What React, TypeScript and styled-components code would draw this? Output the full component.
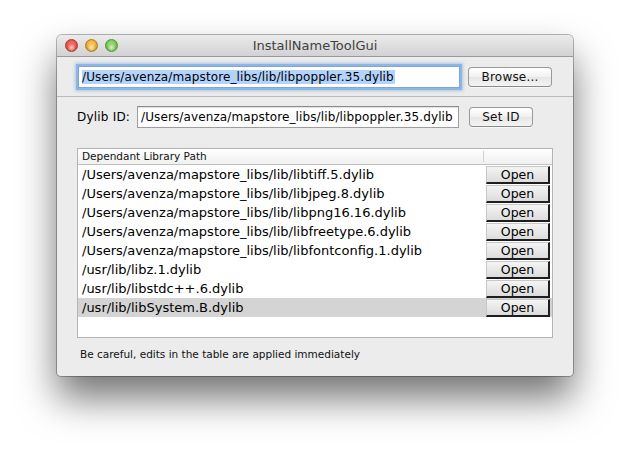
import React from "react";
import styled, { createGlobalStyle } from "styled-components";

const Global = createGlobalStyle`
  html, body { margin: 0; padding: 0; background: #ffffff; }
  body { font-family: "DejaVu Sans", "Liberation Sans", sans-serif; }
`;

const Page = styled.div`
  width: 630px;
  height: 455px;
  padding: 35px 0 0 57px;
  box-sizing: border-box;
`;

const Window = styled.div`
  width: 516px;
  height: 341px;
  background: #ececec;
  border-radius: 5px 5px 4px 4px;
  box-shadow: 0 0 0 1px rgba(0, 0, 0, 0.28), 0 22px 38px rgba(0, 0, 0, 0.55);
  display: flex;
  flex-direction: column;
  overflow: hidden;
`;

const TitleBar = styled.div`
  height: 22px;
  flex: none;
  background: linear-gradient(#ebebeb, #d2d2d2);
  border-bottom: 1px solid #9a9a9a;
  display: flex;
  align-items: center;
  position: relative;
  box-sizing: border-box;
`;

const Lights = styled.div`
  display: flex;
  gap: 7px;
  padding-left: 8px;
`;

const Light = styled.div<{ $c: string; $d: string }>`
  width: 13px;
  height: 13px;
  border-radius: 50%;
  box-sizing: border-box;
  border: 1px solid ${(p) => p.$d};
  background: radial-gradient(circle at 50% 72%, #ffffffaa 0, transparent 45%),
    radial-gradient(circle at 50% 40%, ${(p) => p.$c} 30%, ${(p) => p.$d} 100%);
`;

const Title = styled.div`
  position: absolute;
  left: 0;
  right: 0;
  text-align: center;
  font-size: 13px;
  color: #3f3f3f;
  pointer-events: none;
`;

const TopSection = styled.div`
  height: 40px;
  flex: none;
  display: flex;
  align-items: center;
  padding: 0 20px 0 21px;
  gap: 8px;
  box-sizing: border-box;
  border-bottom: 1px solid #bababa;
`;

const Field = styled.div<{ $focus?: boolean; $w: number }>`
  width: ${(p) => p.$w}px;
  height: 22px;
  flex: none;
  box-sizing: border-box;
  background: #fff;
  border: 1px solid ${(p) => (p.$focus ? "#7fa7d6" : "#9d9d9d")};
  border-top-color: ${(p) => (p.$focus ? "#7fa7d6" : "#8a8a8a")};
  box-shadow: ${(p) =>
    p.$focus
      ? "0 0 0 2px #8db6e6, 0 0 3px 3px rgba(90,150,220,0.45)"
      : "inset 0 1px 1px rgba(0,0,0,0.12)"};
  font-size: 12px;
  letter-spacing: 0.12px;
  line-height: 20px;
  padding-left: 3px;
  white-space: nowrap;
  overflow: hidden;
  color: #000;
`;

const Selected = styled.span`
  background: #b3d3fd;
  padding-right: 1px;
`;

const PushButton = styled.button<{ $w: number; $ml?: number }>`
  width: ${(p) => p.$w}px;
  margin-left: ${(p) => p.$ml ?? 0}px;
  height: 20px;
  flex: none;
  box-sizing: border-box;
  border: 1px solid #9a9a9a;
  border-bottom-color: #8a8a8a;
  border-radius: 4px;
  background: linear-gradient(#ffffff, #f1f1f1 50%, #e6e6e6 51%, #f4f4f4);
  box-shadow: 0 1px 0 rgba(255, 255, 255, 0.6);
  font-family: inherit;
  font-size: 12px;
  letter-spacing: 0.2px;
  color: #111;
  padding: 0;
  line-height: 18px;
`;

const Body = styled.div`
  flex: 1;
  display: flex;
  flex-direction: column;
  padding: 9px 20px 0 20px;
`;

const IdRow = styled.div`
  display: flex;
  align-items: center;
  height: 22px;
`;

const Label = styled.div`
  font-size: 12px;
  letter-spacing: 0.2px;
  color: #000;
  width: 60px;
  flex: none;
`;

const Table = styled.div`
  margin-top: 20px;
  width: 476px;
  height: 190px;
  box-sizing: border-box;
  border: 1px solid #b4b4b4;
  background: #fff;
  display: flex;
  flex-direction: column;
`;

const Header = styled.div`
  height: 16px;
  flex: none;
  box-sizing: border-box;
  border-bottom: 1px solid #c2c2c2;
  background: linear-gradient(#ffffff, #f0f0f0);
  display: grid;
  grid-template-columns: 406px 1fr;
  font-size: 10.5px;
  color: #111;
`;

const HeaderCell = styled.div<{ $last?: boolean }>`
  padding-left: 4px;
  border-right: ${(p) => (p.$last ? "none" : "1px solid #cfcfcf")};
  margin: 2px 0;
  line-height: 11px;
`;

const Row = styled.div<{ $sel?: boolean }>`
  height: 19px;
  flex: none;
  display: grid;
  grid-template-columns: 408px 1fr;
  align-items: center;
  background: ${(p) => (p.$sel ? "#d4d4d4" : "transparent")};
`;

const PathCell = styled.div`
  font-size: 13px;
  padding-left: 4px;
  color: #000;
  white-space: nowrap;
`;

const OpenButton = styled.button`
  width: 64px;
  height: 18px;
  box-sizing: border-box;
  padding: 0;
  border: 1px solid #c8c8c8;
  border-right: 2px solid #1e1e1e;
  border-bottom: 2px solid #1e1e1e;
  background: linear-gradient(#f4f4f4, #dcdcdc);
  font-family: inherit;
  font-size: 12.5px;
  color: #000;
  line-height: 15px;
`;

const Footer = styled.div`
  font-size: 10.5px;
  color: #111;
  padding: 10px 0 0 3px;
`;

const rows = [
  "/Users/avenza/mapstore_libs/lib/libtiff.5.dylib",
  "/Users/avenza/mapstore_libs/lib/libjpeg.8.dylib",
  "/Users/avenza/mapstore_libs/lib/libpng16.16.dylib",
  "/Users/avenza/mapstore_libs/lib/libfreetype.6.dylib",
  "/Users/avenza/mapstore_libs/lib/libfontconfig.1.dylib",
  "/usr/lib/libz.1.dylib",
  "/usr/lib/libstdc++.6.dylib",
  "/usr/lib/libSystem.B.dylib",
];

export default function App() {
  return (
    <Page>
      <Global />
      <Window>
        <TitleBar>
          <Lights>
            <Light $c="#f2675e" $d="#b3312a" />
            <Light $c="#f7c04a" $d="#b57a14" />
            <Light $c="#8fd56a" $d="#4f962f" />
          </Lights>
          <Title>InstallNameToolGui</Title>
        </TitleBar>
        <TopSection>
          <Field $focus $w={382}>
            <Selected>/Users/avenza/mapstore_libs/lib/libpoppler.35.dylib</Selected>
          </Field>
          <PushButton $w={84}>Browse...</PushButton>
        </TopSection>
        <Body>
          <IdRow>
            <Label>Dylib ID:</Label>
            <Field $w={322}>/Users/avenza/mapstore_libs/lib/libpoppler.35.dylib</Field>
            <PushButton $w={64} $ml={10}>
              Set ID
            </PushButton>
          </IdRow>
          <Table>
            <Header>
              <HeaderCell>Dependant Library Path</HeaderCell>
              <HeaderCell $last />
            </Header>
            {rows.map((r, i) => (
              <Row key={r} $sel={i === rows.length - 1}>
                <PathCell>{r}</PathCell>
                <OpenButton>Open</OpenButton>
              </Row>
            ))}
          </Table>
          <Footer>Be careful, edits in the table are applied immediately</Footer>
        </Body>
      </Window>
    </Page>
  );
}
